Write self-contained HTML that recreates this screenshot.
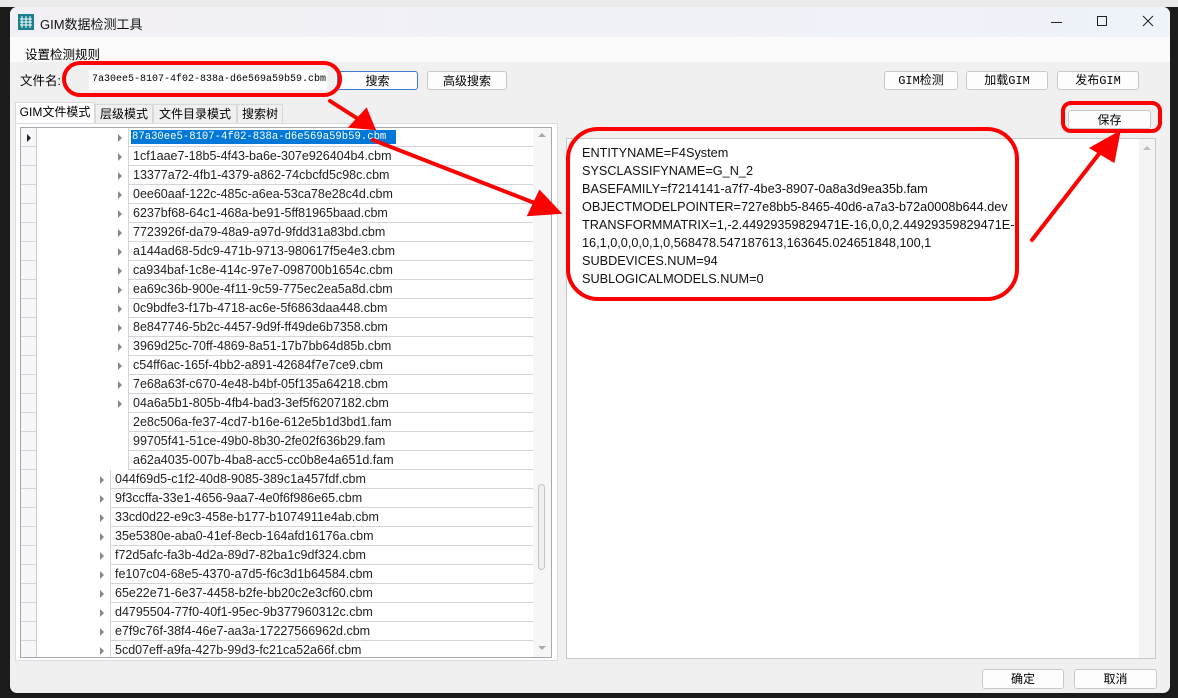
<!DOCTYPE html><html><head><meta charset="utf-8"><style>
*{margin:0;padding:0;box-sizing:border-box}
body{width:1178px;height:698px;overflow:hidden;background:#1b1b1b;font-family:"Liberation Sans","Noto Sans CJK SC",sans-serif;font-size:12px;color:#000;position:relative}
.a{position:absolute}
.btn{position:absolute;background:#fdfdfd;border:1px solid #c9c9c9;border-radius:3px;text-align:center;font-size:12px;line-height:18px}
.mono{font-family:"Liberation Mono","Noto Sans CJK SC",monospace}
.r{position:absolute;left:0;width:512px;height:19px}
.rh{position:absolute;left:0;top:0;width:16px;height:19px;border-right:1px solid #c8c8d0;border-bottom:1px solid #d4d4dc;background:#f7f7f9}
.c{position:absolute;top:0;right:0;height:19px;border-left:1px solid #d4d4dc;border-bottom:1px solid #d4d4dc;background:#fff;padding-left:4px;line-height:18px;font-size:12.5px;white-space:nowrap;color:#222}
.t{position:absolute;top:6px;width:0;height:0;border-top:4px solid transparent;border-bottom:4px solid transparent;border-left:4px solid #888}
.tab{position:absolute;top:104px;height:20px;border:1px solid #d9d9d9;border-bottom:none;background:#f0f0f0;line-height:19px;text-align:center;font-size:12px;white-space:nowrap;overflow:hidden}
</style></head><body>
<div class="a" style="left:0;top:0;width:1178px;height:7px;background:#eaeaea"></div>
<div class="a" style="top:7px;left:10px;width:1160px;height:686px;background:#f0f0f0;border-radius:7px;overflow:hidden">
 <div class="a" style="left:0;top:0;width:1160px;height:30px;background:linear-gradient(90deg,#f2f0f4,#eef2f9)"></div>
 <div class="a" style="left:0;top:30px;width:1160px;height:25px;background:#fafafa"></div>
</div>
<svg class="a" style="left:18px;top:14px" width="16" height="16"><rect width="16" height="16" fill="#1a7f8e"/><g stroke="#fff" stroke-width="1"><path d="M4 2v12M8 2v12M12 2v12M2 5h12M2 8h12M2 11h12"/></g></svg>
<div class="a" style="left:40px;top:14px;font-size:13px;color:#111">GIM数据检测工具</div>
<div class="a" style="left:1051px;top:22px;width:11px;height:1px;background:#222"></div>
<div class="a" style="left:1097px;top:16px;width:10px;height:10px;border:1px solid #222"></div>
<svg class="a" style="left:1142px;top:15px" width="12" height="12"><path d="M1 1L11 11M11 1L1 11" stroke="#222" stroke-width="1"/></svg>
<div class="a" style="left:25px;top:44px;font-size:12.5px">设置检测规则</div>
<div class="a" style="left:20px;top:70px;font-size:12.5px">文件名:</div>
<div class="a mono" style="left:89px;top:70px;width:238px;height:20px;background:#fff;font-size:10px;line-height:20px;padding-left:3px;overflow:hidden;white-space:nowrap">7a30ee5-8107-4f02-838a-d6e569a59b59.cbm</div>
<div class="btn" style="left:337px;top:71px;width:81px;height:19px;border-color:#3d7bd0">搜索</div>
<div class="btn" style="left:427px;top:71px;width:80px;height:19px">高级搜索</div>
<div class="btn mono" style="left:884px;top:71px;width:74px;height:19px">GIM检测</div>
<div class="btn mono" style="left:966px;top:71px;width:82px;height:19px">加载GIM</div>
<div class="btn mono" style="left:1057px;top:71px;width:82px;height:19px">发布GIM</div>
<div class="btn" style="left:1068px;top:110px;width:83px;height:19px">保存</div>
<div class="tab" style="left:15px;width:80px;background:#fff;top:102px;height:22px">GIM文件模式</div>
<div class="tab" style="left:95px;width:58px">层级模式</div>
<div class="tab" style="left:153px;width:84px">文件目录模式</div>
<div class="tab" style="left:237px;width:46px">搜索树</div>
<div class="a" style="left:15px;top:123px;width:543px;height:538px;background:#fff;border:1px solid #dcdcdc"></div>
<div class="a" style="left:20px;top:127px;width:532px;height:531px;border:1px solid #a8a8b4;background:#fff;overflow:hidden">
<div class="r" style="top:0"><div class="rh"><div class="t" style="left:6px;border-left-color:#222"></div></div><div class="t" style="left:97px"></div><div class="c mono" style="left:107px;font-size:10.6px;padding-left:2px"><span style="background:#0078d7;color:#fff;padding:1px 10px 1px 1px">87a30ee5-8107-4f02-838a-d6e569a59b59.cbm</span></div></div>
<div class="r" style="top:19px"><div class="rh"></div><div class="t" style="left:97px"></div><div class="c" style="left:107px">1cf1aae7-18b5-4f43-ba6e-307e926404b4.cbm</div></div>
<div class="r" style="top:38px"><div class="rh"></div><div class="t" style="left:97px"></div><div class="c" style="left:107px">13377a72-4fb1-4379-a862-74cbcfd5c98c.cbm</div></div>
<div class="r" style="top:57px"><div class="rh"></div><div class="t" style="left:97px"></div><div class="c" style="left:107px">0ee60aaf-122c-485c-a6ea-53ca78e28c4d.cbm</div></div>
<div class="r" style="top:76px"><div class="rh"></div><div class="t" style="left:97px"></div><div class="c" style="left:107px">6237bf68-64c1-468a-be91-5ff81965baad.cbm</div></div>
<div class="r" style="top:95px"><div class="rh"></div><div class="t" style="left:97px"></div><div class="c" style="left:107px">7723926f-da79-48a9-a97d-9fdd31a83bd.cbm</div></div>
<div class="r" style="top:114px"><div class="rh"></div><div class="t" style="left:97px"></div><div class="c" style="left:107px">a144ad68-5dc9-471b-9713-980617f5e4e3.cbm</div></div>
<div class="r" style="top:133px"><div class="rh"></div><div class="t" style="left:97px"></div><div class="c" style="left:107px">ca934baf-1c8e-414c-97e7-098700b1654c.cbm</div></div>
<div class="r" style="top:152px"><div class="rh"></div><div class="t" style="left:97px"></div><div class="c" style="left:107px">ea69c36b-900e-4f11-9c59-775ec2ea5a8d.cbm</div></div>
<div class="r" style="top:171px"><div class="rh"></div><div class="t" style="left:97px"></div><div class="c" style="left:107px">0c9bdfe3-f17b-4718-ac6e-5f6863daa448.cbm</div></div>
<div class="r" style="top:190px"><div class="rh"></div><div class="t" style="left:97px"></div><div class="c" style="left:107px">8e847746-5b2c-4457-9d9f-ff49de6b7358.cbm</div></div>
<div class="r" style="top:209px"><div class="rh"></div><div class="t" style="left:97px"></div><div class="c" style="left:107px">3969d25c-70ff-4869-8a51-17b7bb64d85b.cbm</div></div>
<div class="r" style="top:228px"><div class="rh"></div><div class="t" style="left:97px"></div><div class="c" style="left:107px">c54ff6ac-165f-4bb2-a891-42684f7e7ce9.cbm</div></div>
<div class="r" style="top:247px"><div class="rh"></div><div class="t" style="left:97px"></div><div class="c" style="left:107px">7e68a63f-c670-4e48-b4bf-05f135a64218.cbm</div></div>
<div class="r" style="top:266px"><div class="rh"></div><div class="t" style="left:97px"></div><div class="c" style="left:107px">04a6a5b1-805b-4fb4-bad3-3ef5f6207182.cbm</div></div>
<div class="r" style="top:285px"><div class="rh"></div><div class="c" style="left:107px">2e8c506a-fe37-4cd7-b16e-612e5b1d3bd1.fam</div></div>
<div class="r" style="top:304px"><div class="rh"></div><div class="c" style="left:107px">99705f41-51ce-49b0-8b30-2fe02f636b29.fam</div></div>
<div class="r" style="top:323px"><div class="rh"></div><div class="c" style="left:107px">a62a4035-007b-4ba8-acc5-cc0b8e4a651d.fam</div></div>
<div class="r" style="top:342px"><div class="rh"></div><div class="t" style="left:79px"></div><div class="c" style="left:89px">044f69d5-c1f2-40d8-9085-389c1a457fdf.cbm</div></div>
<div class="r" style="top:361px"><div class="rh"></div><div class="t" style="left:79px"></div><div class="c" style="left:89px">9f3ccffa-33e1-4656-9aa7-4e0f6f986e65.cbm</div></div>
<div class="r" style="top:380px"><div class="rh"></div><div class="t" style="left:79px"></div><div class="c" style="left:89px">33cd0d22-e9c3-458e-b177-b1074911e4ab.cbm</div></div>
<div class="r" style="top:399px"><div class="rh"></div><div class="t" style="left:79px"></div><div class="c" style="left:89px">35e5380e-aba0-41ef-8ecb-164afd16176a.cbm</div></div>
<div class="r" style="top:418px"><div class="rh"></div><div class="t" style="left:79px"></div><div class="c" style="left:89px">f72d5afc-fa3b-4d2a-89d7-82ba1c9df324.cbm</div></div>
<div class="r" style="top:437px"><div class="rh"></div><div class="t" style="left:79px"></div><div class="c" style="left:89px">fe107c04-68e5-4370-a7d5-f6c3d1b64584.cbm</div></div>
<div class="r" style="top:456px"><div class="rh"></div><div class="t" style="left:79px"></div><div class="c" style="left:89px">65e22e71-6e37-4458-b2fe-bb20c2e3cf60.cbm</div></div>
<div class="r" style="top:475px"><div class="rh"></div><div class="t" style="left:79px"></div><div class="c" style="left:89px">d4795504-77f0-40f1-95ec-9b377960312c.cbm</div></div>
<div class="r" style="top:494px"><div class="rh"></div><div class="t" style="left:79px"></div><div class="c" style="left:89px">e7f9c76f-38f4-46e7-aa3a-17227566962d.cbm</div></div>
<div class="r" style="top:513px"><div class="rh"></div><div class="t" style="left:79px"></div><div class="c" style="left:89px">5cd07eff-a9fa-427b-99d3-fc21ca52a66f.cbm</div></div>
<div class="a" style="left:512px;top:0;width:18px;height:529px;background:#f6f6f6"></div>
<div class="a" style="left:517px;top:5px;width:0;height:0;border-left:4px solid transparent;border-right:4px solid transparent;border-bottom:4px solid #aaa"></div>
<div class="a" style="left:517px;top:518px;width:0;height:0;border-left:4px solid transparent;border-right:4px solid transparent;border-top:4px solid #aaa"></div>
<div class="a" style="left:517px;top:356px;width:7px;height:86px;border:1px solid #c4c4c4;border-radius:4px;background:#f0f0f0"></div>
</div>
<div class="a" style="left:566px;top:138px;width:590px;height:521px;background:#fff;border:1px solid #c8c8c8"></div>
<div class="a" style="left:1139px;top:139px;width:16px;height:519px;background:#f4f4f4"></div>
<div class="a" style="left:1143px;top:146px;width:0;height:0;border-left:4px solid transparent;border-right:4px solid transparent;border-bottom:4px solid #bbb"></div>
<div class="a" style="left:582px;top:144px;font-size:12.7px;line-height:18px;white-space:pre;color:#111">ENTITYNAME=F4System
SYSCLASSIFYNAME=G_N_2
BASEFAMILY=f7214141-a7f7-4be3-8907-0a8a3d9ea35b.fam
OBJECTMODELPOINTER=727e8bb5-8465-40d6-a7a3-b72a0008b644.dev
TRANSFORMMATRIX=1,-2.44929359829471E-16,0,0,2.44929359829471E-
16,1,0,0,0,0,1,0,568478.547187613,163645.024651848,100,1
SUBDEVICES.NUM=94
SUBLOGICALMODELS.NUM=0</div>
<div class="btn" style="left:982px;top:669px;width:82px;height:20px">确定</div>
<div class="btn" style="left:1074px;top:669px;width:83px;height:20px">取消</div>
<svg class="a" style="left:0;top:0" width="1178" height="698" fill="none" stroke="#f00" stroke-width="4" stroke-linecap="round">
<rect x="64" y="63" width="276" height="32" rx="16"/>
<rect x="568" y="129" width="449" height="170" rx="30"/>
<rect x="1063" y="103" width="97" height="28" rx="8"/>
<path d="M330 101L366 124"/><path d="M352 126L373 128L366 111Z" fill="#f00"/>
<path d="M373 140L545 207"/><path d="M530 214L558 212L540 193Z" fill="#f00"/>
<path d="M1032 240L1102 150"/><path d="M1093 148L1118 134L1113 160Z" fill="#f00"/>
</svg>
</body></html>
